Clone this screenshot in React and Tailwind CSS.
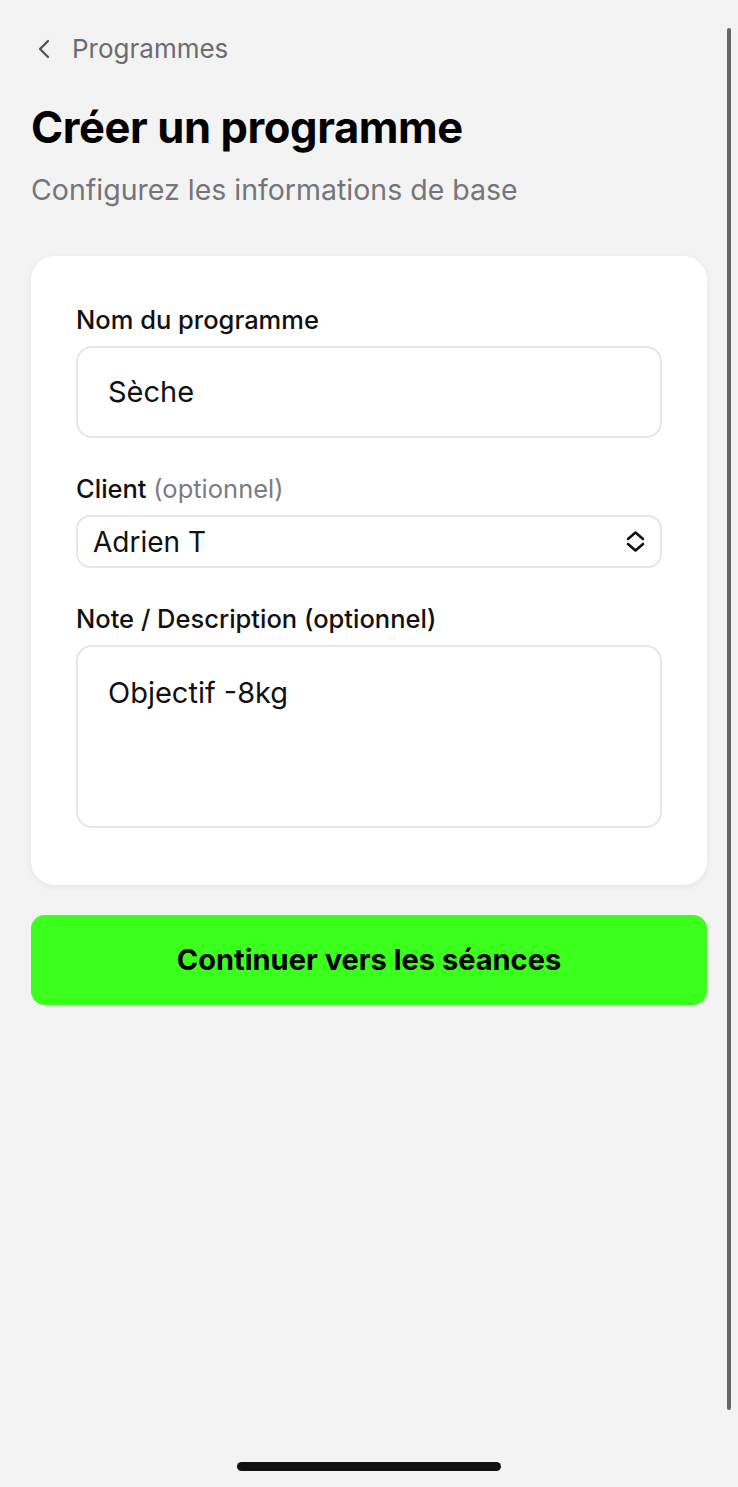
import React from 'react';

function ChevronUpDown() {
  return (
    <svg width="21" height="23" viewBox="0 0 21 23" fill="none" stroke="#111" strokeWidth="2.6" strokeLinecap="round" strokeLinejoin="round">
      <path d="M3 9 L10.5 2.5 L18 9" />
      <path d="M3 14 L10.5 20.5 L18 14" />
    </svg>
  );
}

export default function App() {
  return (
    <div className="relative min-h-[1487px] w-full bg-[#f3f3f3] font-['Inter',sans-serif] text-[#111]">
      {/* scroll indicator */}
      <div className="absolute right-[7px] top-[28px] h-[1382px] w-[4px] rounded-full bg-[#666]" />

      <div className="px-[31px] pt-[33px]">
        {/* back link */}
        <div className="flex items-center gap-[21px] pl-[6px]">
          <svg width="14" height="22" viewBox="0 0 14 22" fill="none" stroke="#555" strokeWidth="2.4" strokeLinecap="round" strokeLinejoin="round">
            <path d="M11 3 L3 11 L11 19" />
          </svg>
          <span className="text-[26px] leading-[32px] text-[#6b6b70]">Programmes</span>
        </div>

        <h1 className="mt-[36px] text-[43.5px] font-bold leading-[52px] tracking-[-0.4px] text-black">Créer un programme</h1>
        <p className="mt-[19px] text-[28.5px] leading-[36px] text-[#75757a]">Configurez les informations de base</p>

        {/* form card */}
        <div className="mt-[48px] rounded-[24px] bg-white px-[45px] pt-[48px] pb-[57px] shadow-[0_2px_6px_rgba(0,0,0,0.06)]">
          <label className="block text-[25.5px] font-medium leading-[32px]">Nom du programme</label>
          <div className="mt-[10px] flex h-[92px] items-center rounded-[16px] border-2 border-[#e6e6e6] px-[30px] text-[29px]">
            Sèche
          </div>

          <label className="mt-[35px] block text-[25.5px] font-medium leading-[32px]">
            Client <span className="font-normal text-[#7b7b80]">(optionnel)</span>
          </label>
          <div className="mt-[10px] flex h-[53px] items-center justify-between rounded-[14px] border-2 border-[#e6e6e6] pl-[15px] pr-[14px] text-[28px]">
            <span>Adrien T</span>
            <ChevronUpDown />
          </div>

          <label className="mt-[35px] block text-[25.5px] font-medium leading-[32px]">Note / Description (optionnel)</label>
          <div className="mt-[10px] h-[183px] rounded-[16px] border-2 border-[#e6e6e6] px-[30px] pt-[26px] text-[29px] leading-[40px]">
            Objectif -8kg
          </div>
        </div>

        <button className="mt-[30px] flex h-[90px] w-full items-center justify-center rounded-[14px] bg-[#3bff1d] text-[29px] font-bold text-black">
          Continuer vers les séances
        </button>
      </div>

      {/* home indicator */}
      <div className="absolute bottom-[16px] left-[237px] h-[9px] w-[264px] rounded-full bg-[#111]" />
    </div>
  );
}
